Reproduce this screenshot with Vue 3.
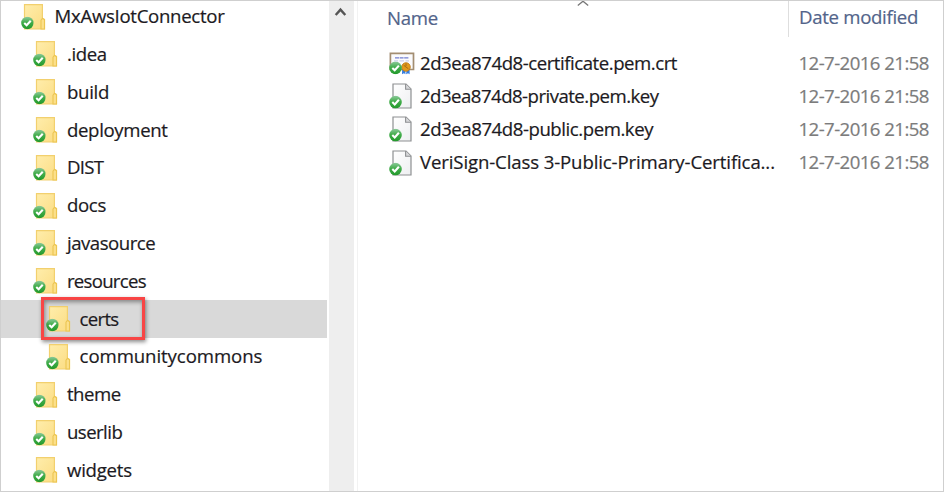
<script setup>
const folders = [
  { name: 'MxAwsIotConnector', level: 0, tracking: -0.3 },
  { name: '.idea', level: 1, tracking: -0.4 },
  { name: 'build', level: 1, tracking: -0.3 },
  { name: 'deployment', level: 1, tracking: -0.35 },
  { name: 'DIST', level: 1, tracking: -0.7 },
  { name: 'docs', level: 1, tracking: -0.35 },
  { name: 'javasource', level: 1, tracking: -0.48 },
  { name: 'resources', level: 1, tracking: -0.72 },
  { name: 'certs', level: 2, selected: true, tracking: -0.7 },
  { name: 'communitycommons', level: 2, tracking: -0.08 },
  { name: 'theme', level: 1, tracking: -0.5 },
  { name: 'userlib', level: 1, tracking: -0.55 },
  { name: 'widgets', level: 1, tracking: -0.25 },
]
const files = [
  { name: '2d3ea874d8-certificate.pem.crt', type: 'cert', tracking: -0.46 },
  { name: '2d3ea874d8-private.pem.key', type: 'file', tracking: -0.52 },
  { name: '2d3ea874d8-public.pem.key', type: 'file', tracking: -0.44 },
  { name: 'VeriSign-Class 3-Public-Primary-Certifica...', type: 'file', tracking: -0.12 },
]
</script>

<template>
  <svg class="defs" width="0" height="0" aria-hidden="true">
    <defs>
      <linearGradient id="folderFill" x1="0" y1="0" x2="1" y2="1">
        <stop offset="0" stop-color="#ffedab" />
        <stop offset="1" stop-color="#fbdc82" />
      </linearGradient>
      <linearGradient id="badgeFill" x1="0" y1="0" x2="0" y2="1">
        <stop offset="0" stop-color="#8cc99a" />
        <stop offset=".45" stop-color="#43ad4c" />
        <stop offset="1" stop-color="#21992a" />
      </linearGradient>
      <linearGradient id="pageFill" x1="0" y1="0" x2="1" y2="1">
        <stop offset="0" stop-color="#ffffff" />
        <stop offset="1" stop-color="#eeeff1" />
      </linearGradient>
      <symbol id="badge" viewBox="0 0 13 13">
        <circle cx="6.5" cy="6.5" r="6.3" fill="url(#badgeFill)" />
        <path d="M3.3 6.5 5.7 8.8 9.9 4.2" fill="none" stroke="#fff" stroke-width="2.1" />
      </symbol>
      <symbol id="folder" viewBox="0 0 25 26">
        <path d="M3.5.7H21.4V14.5L23.5 15.5V25H3.5Z" fill="url(#folderFill)" stroke="#f2d06e" stroke-width="1.2" />
        <path d="M20 25V16.2L21.6 14.2 23.5 15.7V25Z" fill="#fce08a" stroke="#ecc552" stroke-width="1.1" />
        <use href="#badge" x="0" y="12.6" width="12.8" height="12.8" />
      </symbol>
      <symbol id="file" viewBox="0 0 26 26">
        <path d="M4 1H17L22 6V25H4Z" fill="url(#pageFill)" stroke="#8e9092" stroke-width="1.2" />
        <path d="M16.6 1V6.3H22" fill="#d7d8da" stroke="#8e9092" stroke-width="1.1" />
        <use href="#badge" x="0" y="12.6" width="13" height="13" />
      </symbol>
      <symbol id="cert" viewBox="0 0 26 26">
        <path d="M1.4 3.4H24.5V19.5H1.4Z" fill="#fbfbfd" stroke="#a38e72" stroke-width="1.7" />
        <path d="M6 7.9H20" stroke="#727fd0" stroke-width="1.2" stroke-dasharray="4 .6" />
        <path d="M5 10.9H9M10.5 10.9H15M16.5 10.9H20" stroke="#c3c9e5" stroke-width="1" />
        <path d="M13.2 18.5H16.4V24.2L14.9 23.3 13 24.2ZM17.6 18.5H20.6V24.2L19 23.3 17.2 24.2Z" fill="#337de0" />
        <circle cx="17" cy="17" r="4.3" fill="#e29a1c" stroke="#bd7a18" stroke-width=".8" />
        <path d="M14.6 15.2 19.4 18.8M17 13.5V16" stroke="#a76a14" stroke-width="1" />
        <use href="#badge" x="0" y="11.4" width="13" height="13" />
      </symbol>
    </defs>
  </svg>

  <main class="explorer">
    <nav class="tree">
      <div v-for="f in folders" :key="f.name" class="folder" :class="['level-' + f.level, { selected: f.selected }]">
        <svg class="folder-icon"><use href="#folder" /></svg>
        <span class="label" :style="{ letterSpacing: f.tracking + 'px' }">{{ f.name }}</span>
        <span v-if="f.selected" class="highlight"></span>
      </div>
    </nav>
    <div class="scrollbar">
      <svg class="arrow" viewBox="0 0 12 10"><path d="M1.2 8 6 2.6 10.8 8" /></svg>
    </div>
    <section class="list">
      <svg class="sort" viewBox="0 0 12 5"><path d="M.8 4.4 6 .2 11.2 4.4" /></svg>
      <header class="head">
        <span class="name-col">Name</span>
        <span class="date-col">Date modified</span>
      </header>
      <div v-for="f in files" :key="f.name" class="file">
        <svg class="file-icon"><use :href="'#' + f.type" /></svg>
        <span class="file-name" :style="{ letterSpacing: f.tracking + 'px' }">{{ f.name }}</span>
        <span class="date">12-7-2016 21:58</span>
      </div>
    </section>
  </main>
</template>

<style>
body { background: #fff; }
</style>

<style scoped>
.defs { position: absolute; }
.explorer {
  box-sizing: border-box;
  width: 944px;
  height: 492px;
  display: flex;
  overflow: hidden;
  border: 1px solid #cfcfcf;
  background: #fff;
  color: #1c1a22;
  font-family: "Open Sans", "Noto Sans", sans-serif;
  font-size: 18.6px;
  letter-spacing: -0.3px;
  white-space: nowrap;
  -webkit-text-stroke: 0.2px currentColor;
}
.tree { width: 326px; flex: none; margin-top: -3.4px; }
.folder {
  position: relative;
  height: 37.84px;
  display: flex;
  align-items: center;
  box-sizing: border-box;
}
.level-0 { padding-left: 20px; }
.level-1 { padding-left: 32.4px; }
.level-2 { padding-left: 45px; }
.selected { background: #d9d9d9; }
.label { padding-bottom: 2px; }
.folder-icon { width: 25px; height: 26px; flex: none; margin-right: 8.6px; }
.highlight {
  position: absolute;
  left: 40px;
  top: -3px;
  width: 104px;
  height: 43px;
  box-sizing: border-box;
  border: 3px solid #f84545;
  box-shadow: 1px 2px 4px rgba(0, 0, 0, .45), inset 1px 2px 4px rgba(0, 0, 0, .4);
}
.scrollbar { width: 25px; flex: none; margin-left: 2px; background: #eee; }
.arrow { display: block; width: 13px; height: 10px; margin: 6px 0 0 5px; }
.arrow path { fill: none; stroke: #555; stroke-width: 2.4; }
.list { position: relative; flex: 1; margin-left: 3px; border-left: 1px solid #f2f2f2; }
.sort { position: absolute; left: 219px; top: 0; width: 12px; height: 5px; }
.sort path { fill: none; stroke: #777; stroke-width: 1.3; }
.head {
  display: flex;
  height: 36px;
  align-items: center;
  margin-bottom: 9.5px;
  color: #52648a;
}
.name-col { width: 399px; padding-left: 29px; padding-bottom: 4px; box-sizing: border-box; }
.date-col {
  height: 36px;
  line-height: 32px;
  margin-left: 31px;
  padding-left: 10px;
  border-left: 1px solid #dedede;
}
.file { display: flex; height: 33.2px; align-items: center; padding-left: 30.5px; }
.file-icon { width: 26px; height: 26px; flex: none; margin-right: 5.5px; }
.file-name { width: 378.5px; flex: none; padding-bottom: 2px; }
.date { color: #7c7c7c; letter-spacing: -0.55px; padding-bottom: 2px; }
</style>
